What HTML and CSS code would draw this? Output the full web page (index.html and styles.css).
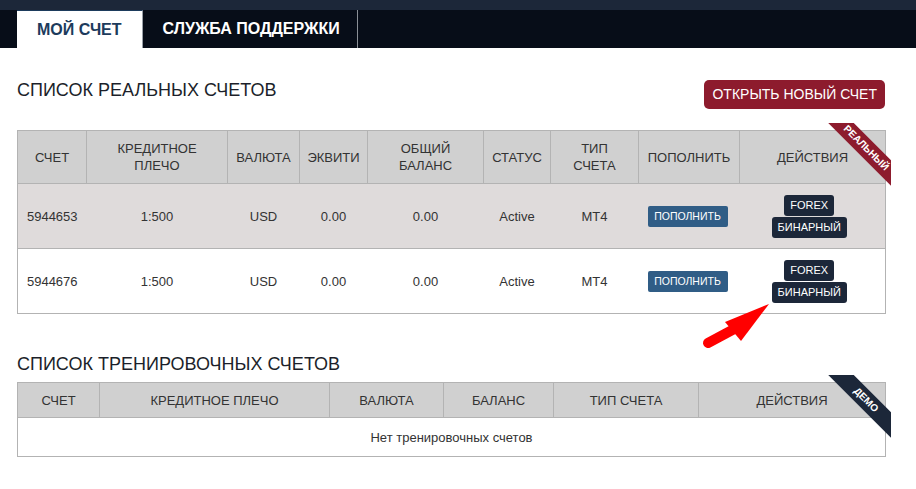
FILE: index.html
```html
<!doctype html>
<html>
<head>
  <meta charset="utf-8"/>
  <title>Мой счет</title>
  <link rel="stylesheet" href="styles.css">
</head>
<body>
  <div class="topbar"></div>
  <div class="nav">
    <div class="tab active">МОЙ СЧЕТ</div>
    <div class="tab">СЛУЖБА ПОДДЕРЖКИ</div>
  </div>

  <div class="main">
    <div class="section-head">
      <h2>СПИСОК РЕАЛЬНЫХ СЧЕТОВ</h2>
      <div class="btn-open">ОТКРЫТЬ НОВЫЙ СЧЕТ</div>
    </div>

    <div class="table-wrap real">
      <table class="accounts">
        <colgroup>
          <col style="width:69px"><col style="width:141px"><col style="width:72px">
          <col style="width:68px"><col style="width:116px"><col style="width:67px">
          <col style="width:88px"><col style="width:101px"><col style="width:146px">
        </colgroup>
        <tr class="head">
          <th>СЧЕТ</th>
          <th>КРЕДИТНОЕ<br>ПЛЕЧО</th>
          <th>ВАЛЮТА</th>
          <th>ЭКВИТИ</th>
          <th>ОБЩИЙ<br>БАЛАНС</th>
          <th>СТАТУС</th>
          <th>ТИП<br>СЧЕТА</th>
          <th>ПОПОЛНИТЬ</th>
          <th>ДЕЙСТВИЯ</th>
        </tr>
        <tr class="odd">
          <td>5944653</td><td>1:500</td><td>USD</td><td>0.00</td><td>0.00</td>
          <td>Active</td><td>MT4</td>
          <td><span class="btn-fund">ПОПОЛНИТЬ</span></td>
          <td><div class="actions"><span class="btn-dark">FOREX</span><span class="btn-dark">БИНАРНЫЙ</span></div></td>
        </tr>
        <tr>
          <td>5944676</td><td>1:500</td><td>USD</td><td>0.00</td><td>0.00</td>
          <td>Active</td><td>MT4</td>
          <td><span class="btn-fund">ПОПОЛНИТЬ</span></td>
          <td><div class="actions"><span class="btn-dark">FOREX</span><span class="btn-dark">БИНАРНЫЙ</span></div></td>
        </tr>
      </table>
      <div class="ribbon red"><span>РЕАЛЬНЫЙ</span></div>
    </div>

    <h2 class="demo-title">СПИСОК ТРЕНИРОВОЧНЫХ СЧЕТОВ</h2>

    <div class="table-wrap">
      <table class="accounts demo">
        <colgroup>
          <col style="width:82px"><col style="width:230px"><col style="width:114px">
          <col style="width:110px"><col style="width:145px"><col style="width:187px">
        </colgroup>
        <tr class="head">
          <th>СЧЕТ</th>
          <th>КРЕДИТНОЕ ПЛЕЧО</th>
          <th>ВАЛЮТА</th>
          <th>БАЛАНС</th>
          <th>ТИП СЧЕТА</th>
          <th>ДЕЙСТВИЯ</th>
        </tr>
        <tr>
          <td colspan="6">Нет тренировочных счетов</td>
        </tr>
      </table>
      <div class="ribbon dark"><span>ДЕМО</span></div>
    </div>
  </div>

  <!-- стрелка-подсказка поверх таблицы -->
  <svg class="arrow" width="80" height="56" viewBox="0 0 80 56">
    <line x1="8" y1="44" x2="36" y2="29" stroke="#ff0000" stroke-width="10" stroke-linecap="round"/>
    <polygon points="69,5 25,23 41,42" fill="#ff0000"/>
  </svg>
</body>
</html>
```

FILE: styles.css
```css
html, body {
  margin: 0;
  background: #fff;
  font-family: "Liberation Sans", Arial, sans-serif;
  color: #333;
}
body {
  position: relative;
  width: 916px;
  height: 489px;
  overflow: hidden;
}
.topbar {
  height: 10px;
  background: #1c2739;
}
.nav {
  height: 38px;
  background: #070d18;
  padding-left: 17px;
  display: flex;
}
.tab {
  padding: 0 17px 0 20px;
  line-height: 38px;
  font-size: 16px;
  font-weight: bold;
  color: #fff;
  border-right: 1px solid #8a8f96;
}
.tab.active {
  background: #fff;
  color: #1d3b5c;
  border-right: 1px solid #9aa0a8;
  border-top: 1px solid #1d3b5c;
  line-height: 37px;
  padding: 0 20px;
}

.main {
  padding: 32px 31px 0 17px;
}
.section-head {
  display: flex;
  justify-content: space-between;
  align-items: flex-start;
  height: 29px;
}
h2 {
  margin: 0;
  font-size: 18px;
  line-height: 20px;
  font-weight: normal;
  color: #1c1f2a;
}
.btn-open {
  height: 29px;
  line-height: 29px;
  padding: 0 8px;
  background: #8d1b2d;
  color: #fff;
  font-size: 14px;
  border-radius: 5px;
  box-sizing: border-box;
}

.table-wrap {
  position: relative;
}
.table-wrap.real {
  margin-top: 21px;
}
.accounts {
  width: 868px;
  table-layout: fixed;
  border-collapse: collapse;
  border: 1px solid #b3b3b3;
  font-size: 13px;
}
.accounts th {
  background: #d0d0d0;
  font-weight: normal;
  color: #333;
  line-height: 17px;
  height: 52px;
  padding: 0;
  border: 1px solid #b3b3b3;
  text-align: center;
}
.accounts td {
  height: 64px;
  padding: 0;
  text-align: center;
  border-top: 1px solid #b3b3b3;
  color: #333;
}
.accounts tr.odd td {
  background: #dfdbdb;
}
.btn-fund {
  display: inline-block;
  width: 80px;
  height: 21px;
  line-height: 21px;
  background: #305d86;
  color: #fff;
  font-size: 10.5px;
  border-radius: 2px;
  margin-right: 3px;
}
.actions {
  display: flex;
  flex-direction: column;
  align-items: center;
  gap: 1px;
  padding-right: 6px;
}
.btn-dark {
  display: block;
  height: 21px;
  line-height: 21px;
  padding: 0 6px;
  background: #1c2739;
  color: #fff;
  font-size: 11px;
  border-radius: 3px;
}

.demo-title {
  margin: 40px 0 8px;
}
.accounts.demo th {
  height: 34px;
}
.accounts.demo td {
  height: 38px;
}

.ribbon {
  position: absolute;
  top: -7px;
  right: -6px;
  width: 64px;
  height: 64px;
  overflow: hidden;
}
.ribbon span {
  position: absolute;
  top: 16px;
  left: -9px;
  width: 96px;
  line-height: 18px;
  transform: rotate(45deg);
  text-align: center;
  font-size: 10px;
  font-weight: bold;
  color: #fff;
}
.ribbon.red span {
  background: #8d1b2d;
}
.ribbon.dark span {
  background: #1c2739;
}

.arrow {
  position: absolute;
  left: 700px;
  top: 299px;
}
```
